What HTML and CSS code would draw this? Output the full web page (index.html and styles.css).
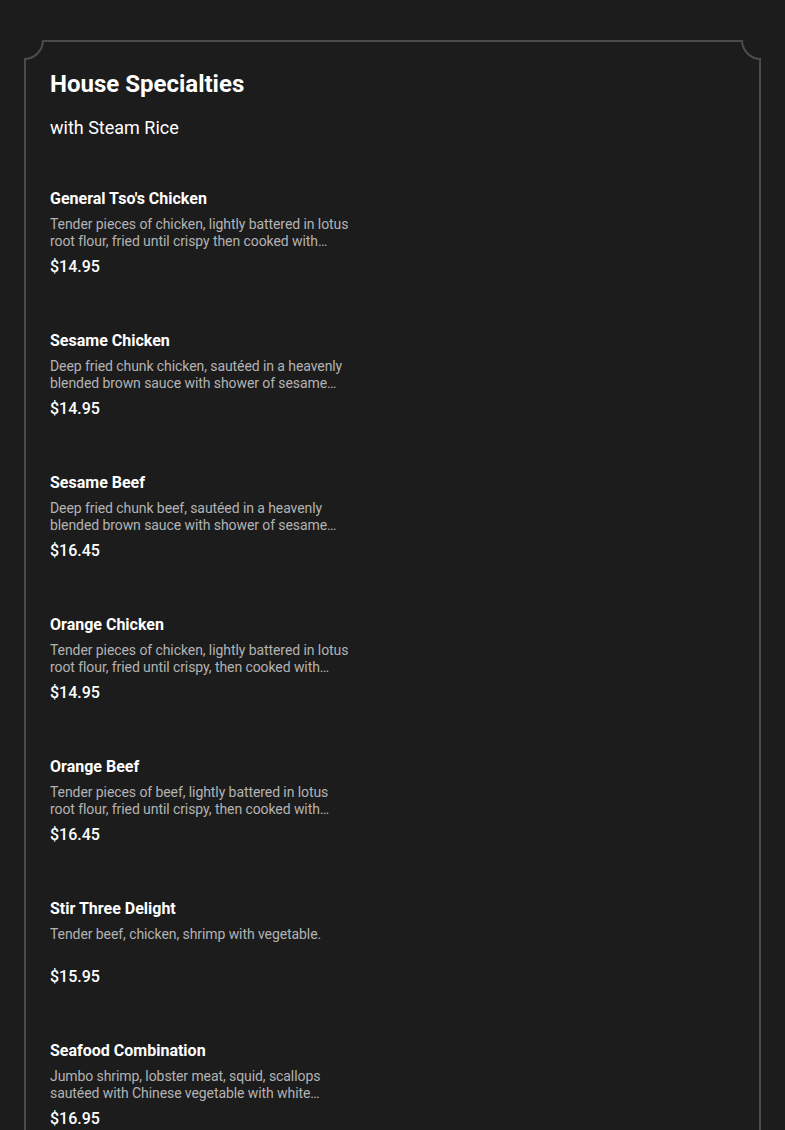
FILE: index.html
```html
<!DOCTYPE html>
<html lang="en">
<head>
<meta charset="utf-8">
<title>House Specialties</title>
<link rel="stylesheet" href="styles.css">
</head>
<body>
<div class="page">
  <section class="frame">
    <svg class="notch notch-left" width="20" height="20" viewBox="0 0 20 20" aria-hidden="true">
      <rect x="0" y="0" width="20" height="20" fill="#1c1c1d"/>
      <path d="M19 0 A19 19 0 0 1 0 19" fill="none" stroke="#4d4d4e" stroke-width="2"/>
    </svg>
    <svg class="notch notch-right" width="20" height="20" viewBox="0 0 20 20" aria-hidden="true">
      <rect x="0" y="0" width="20" height="20" fill="#1c1c1d"/>
      <path d="M1 0 A19 19 0 0 0 20 19" fill="none" stroke="#4d4d4e" stroke-width="2"/>
    </svg>
    <header class="head">
      <h1 class="title">House Specialties</h1>
      <p class="subtitle">with Steam Rice</p>
    </header>
    <ul class="menu">
      <li class="item">
        <h2 class="name">General Tso's Chicken</h2>
        <p class="desc">Tender pieces of chicken, lightly battered in lotus root flour, fried until crispy then cooked with sweet and spicy sauce.</p>
        <p class="price">$14.95</p>
      </li>
      <li class="item">
        <h2 class="name">Sesame Chicken</h2>
        <p class="desc">Deep fried chunk chicken, sautéed in a heavenly blended brown sauce with shower of sesame seeds.</p>
        <p class="price">$14.95</p>
      </li>
      <li class="item">
        <h2 class="name">Sesame Beef</h2>
        <p class="desc">Deep fried chunk beef, sautéed in a heavenly blended brown sauce with shower of sesame seeds.</p>
        <p class="price">$16.45</p>
      </li>
      <li class="item">
        <h2 class="name">Orange Chicken</h2>
        <p class="desc">Tender pieces of chicken, lightly battered in lotus root flour, fried until crispy, then cooked with orange flavored sauce.</p>
        <p class="price">$14.95</p>
      </li>
      <li class="item">
        <h2 class="name">Orange Beef</h2>
        <p class="desc">Tender pieces of beef, lightly battered in lotus root flour, fried until crispy, then cooked with orange flavored sauce.</p>
        <p class="price">$16.45</p>
      </li>
      <li class="item">
        <h2 class="name">Stir Three Delight</h2>
        <p class="desc">Tender beef, chicken, shrimp with vegetable.</p>
        <p class="price">$15.95</p>
      </li>
      <li class="item">
        <h2 class="name">Seafood Combination</h2>
        <p class="desc">Jumbo shrimp, lobster meat, squid, scallops sautéed with Chinese vegetable with white sauce.</p>
        <p class="price">$16.95</p>
      </li>
    </ul>
  </section>
</div>
</body>
</html>
```

FILE: styles.css
```css
* { box-sizing: border-box; }
html, body {
  margin: 0;
  padding: 0;
  background: #1c1c1d;
}
body {
  font-family: Roboto, "Liberation Sans", sans-serif;
  color: #ffffff;
}
.page {
  padding: 40px 24px 0 24px;
}
.frame {
  position: relative;
  border: 2px solid #4a4a4b;
  border-bottom: none;
  padding: 26px 24px 40px 24px;
  min-height: 1200px;
}
.notch {
  position: absolute;
  top: -2px;
  display: block;
}
.notch-left { left: -2px; }
.notch-right { right: -2px; }
.head {
  display: flex;
  flex-direction: column;
  gap: 16px;
}
.title {
  margin: 0;
  font-size: 24px;
  line-height: 32px;
  font-weight: 700;
}
.subtitle {
  margin: 0;
  font-size: 18px;
  line-height: 24px;
  font-weight: 400;
}
.menu {
  list-style: none;
  margin: 49px 0 0 0;
  padding: 0;
  display: flex;
  flex-direction: column;
  gap: 55px;
}
.item {
  display: flex;
  flex-direction: column;
  width: 300px;
}
.name {
  margin: 0 0 8px 0;
  font-size: 16px;
  line-height: 19px;
  font-weight: 700;
}
.desc {
  margin: 0 0 7px 0;
  font-size: 14px;
  line-height: 17px;
  letter-spacing: -0.08px;
  height: 34px;
  color: #b3b3b3;
  display: -webkit-box;
  -webkit-line-clamp: 2;
  -webkit-box-orient: vertical;
  overflow: hidden;
}
.price {
  margin: 0;
  font-size: 16px;
  line-height: 19px;
  font-weight: 500;
}
```
